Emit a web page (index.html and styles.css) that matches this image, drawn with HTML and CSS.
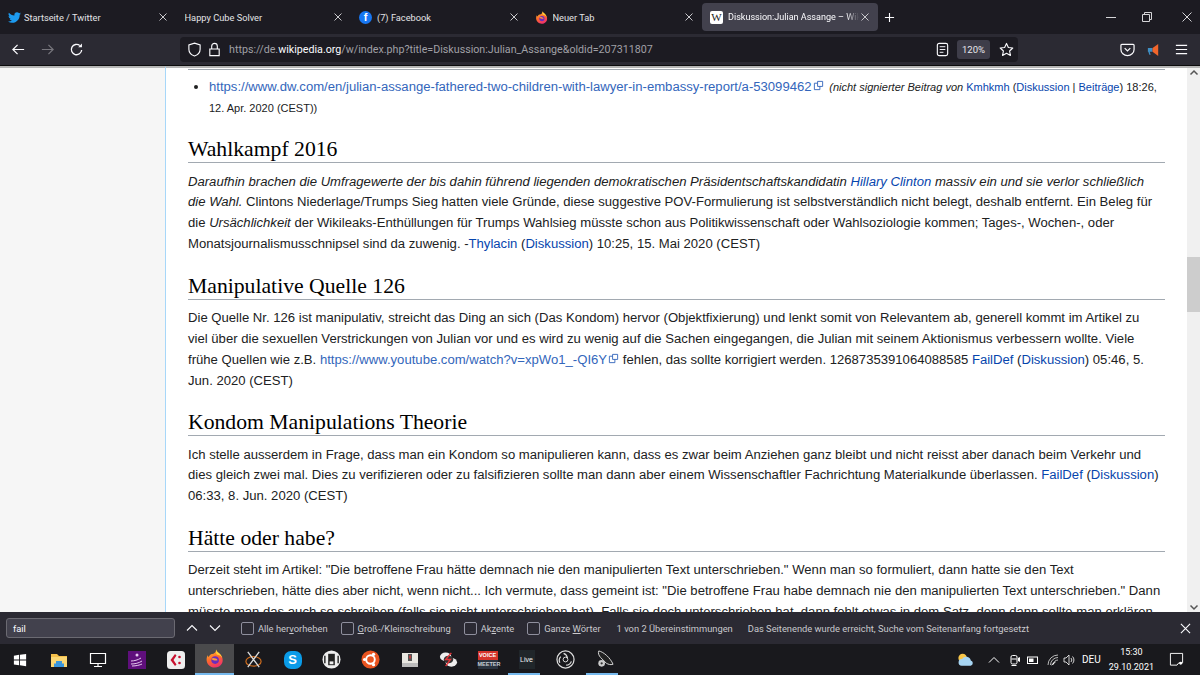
FILE: index.html
```html
<!DOCTYPE html>
<html lang="de">
<head>
<meta charset="utf-8">
<title>Diskussion:Julian Assange</title>
<link rel="stylesheet" href="styles.css">
</head>
<body>
<svg class="defs" width="0" height="0" aria-hidden="true">
  <defs>
    <linearGradient id="ffg" x1="0.2" y1="0" x2="0.6" y2="1"><stop offset="0" stop-color="#ffc42e"/><stop offset="0.5" stop-color="#ff6a2b"/><stop offset="1" stop-color="#ee2f6f"/></linearGradient>
    <symbol id="ff" viewBox="0 0 24 24">
      <path d="M14 .5c.4 2.800 3.500 4 5.500 6.500 2.800 3.200 3.700 7.300 2.200 10.800-1.800 3.900-5.500 5.700-9.500 5.700-5.500 0-10.200-4.400-10.200-10 0-2.100.6-4 1.500-5.500.2 1 .6 1.700 1.300 2.300.5-2 1.800-3.300 3.700-4 1.400.2 2.700-.3 3.500-1.200C13.700 3.800 14.300 2.200 14 .5z" fill="url(#ffg)"/>
      <path d="M14 .5c.4 2.800 3.500 4 5.500 6.500 1.200 1.400 2 3 2.400 4.600-2-3-4.500-4-7-4.500-1.200-1.700-1.400-4.600-.9-6.600z" fill="#ffd23a"/>
      <circle cx="12.800" cy="14" r="4.800" fill="#6a2dbd"/>
      <path d="M8 12.500c1.500-1.600 3.500-1.600 5-.5 1.300 0 2.500.7 2.800 2.200-2.400.6-5.300.3-7.800-1.700z" fill="#ff9a3a"/>
    </symbol>
    <symbol id="x" viewBox="0 0 10 10"><path d="M1.500 1.500l7 7M8.500 1.500l-7 7" fill="none" stroke="currentColor" stroke-width="1"/></symbol>
  </defs>
</svg>
<div class="window">
  <header class="tabstrip">
    <div class="tab">
      <svg class="fav fav-first" viewBox="0 0 24 24"><path fill="#1d9bf0" d="M23.953 4.570a10 10 0 01-2.825.775 4.958 4.958 0 002.163-2.723c-.951.555-2.005.959-3.127 1.184a4.920 4.920 0 00-8.384 4.482C7.690 8.095 4.067 6.130 1.640 3.162a4.822 4.822 0 00-.666 2.475c0 1.710.870 3.213 2.188 4.096a4.904 4.904 0 01-2.228-.616v.060a4.923 4.923 0 003.946 4.827 4.996 4.996 0 01-2.212.085 4.936 4.936 0 004.604 3.417 9.867 9.867 0 01-6.102 2.105c-.390 0-.779-.023-1.170-.067a13.995 13.995 0 007.557 2.209c9.053 0 13.998-7.496 13.998-13.985 0-.210 0-.420-.015-.630A9.935 9.935 0 0024 4.590z"/></svg>
      <span class="tab-title">Startseite / Twitter</span>
      <svg class="tab-x"><use href="#x"/></svg>
    </div>
    <div class="tab tab-nofav">
      <span class="tab-title">Happy Cube Solver</span>
      <svg class="tab-x"><use href="#x"/></svg>
    </div>
    <div class="tab">
      <span class="fav fav-fb">f</span>
      <span class="tab-title">(7) Facebook</span>
      <svg class="tab-x"><use href="#x"/></svg>
    </div>
    <div class="tab">
      <svg class="fav"><use href="#ff"/></svg>
      <span class="tab-title">Neuer Tab</span>
      <svg class="tab-x"><use href="#x"/></svg>
    </div>
    <div class="tab tab-active">
      <span class="fav fav-w">W</span>
      <span class="tab-title tab-fade">Diskussion:Julian Assange – Wikipedia</span>
      <svg class="tab-x tab-x-active"><use href="#x"/></svg>
    </div>
    <svg class="newtab" viewBox="0 0 12 12"><path d="M6 1v10M1 6h10" stroke="#fbfbfe" stroke-width="1.200"/></svg>
    <div class="winctl">
      <svg viewBox="0 0 10 10"><path d="M0 5.500h10" stroke="#d5d5d8" stroke-width="1"/></svg>
      <svg viewBox="0 0 10 10"><path d="M.5 2.500h7v7h-7zM2.500 2.500v-2h7v7h-2" fill="none" stroke="#d5d5d8"/></svg>
      <svg class="win-close" viewBox="0 0 10 10"><path d="M.5.500l9 9M9.500.500l-9 9" stroke="#d5d5d8"/></svg>
    </div>
  </header>

  <nav class="toolbar">
    <svg class="tb-ic" viewBox="0 0 16 16"><path d="M14 8H2.500M7 3L2 8l5 5" fill="none" stroke="#fbfbfe" stroke-width="1.300"/></svg>
    <svg class="tb-ic tb-fwd" viewBox="0 0 16 16"><path d="M2 8h11.500M9 3l5 5-5 5" fill="none" stroke="#77767d" stroke-width="1.300"/></svg>
    <svg class="tb-ic tb-reload" viewBox="0 0 16 16"><path d="M13.500 8.500A5.500 5.500 0 1 1 11.500 3.800" fill="none" stroke="#fbfbfe" stroke-width="1.400"/><path d="M13.800 1.500v4h-4z" fill="#fbfbfe"/></svg>
    <div class="urlbar">
      <svg class="url-ic" viewBox="0 0 16 16"><path d="M8 1.200l6 2v4.500c0 3.500-2.500 6-6 7.200-3.500-1.200-6-3.700-6-7.200V3.200z" fill="none" stroke="#fbfbfe" stroke-width="1.200"/></svg>
      <svg class="url-ic url-lock" viewBox="0 0 16 16"><path d="M3 7.500h10v7H3zM5 7.500V4.500a3 3 0 0 1 6 0v3" fill="none" stroke="#fbfbfe" stroke-width="1.200"/></svg>
      <span class="url-text">https://de.<b>wikipedia.org</b>/w/index.php?title=Diskussion:Julian_Assange&amp;oldid=207311807</span>
      <svg class="url-ic url-reader" viewBox="0 0 16 16"><rect x="2.500" y="1.500" width="11" height="13" rx="2" fill="none" stroke="#fbfbfe" stroke-width="1.200"/><path d="M5 5h6M5 8h6M5 11h4" stroke="#fbfbfe"/></svg>
      <span class="zoom-badge">120%</span>
      <svg class="url-ic url-star" viewBox="0 0 16 16"><path d="M8 1.500l2 4.300 4.700.6-3.400 3.200.9 4.700L8 12l-4.200 2.300.9-4.700L1.300 6.400 6 5.800z" fill="none" stroke="#fbfbfe" stroke-width="1.200" stroke-linejoin="round"/></svg>
    </div>
    <svg class="tb-ic tb-pocket" viewBox="0 0 16 16"><path d="M2 2.500h12a1 1 0 0 1 1 1V8a7 6.500 0 0 1-14 0V3.500a1 1 0 0 1 1-1z" fill="none" stroke="#fbfbfe" stroke-width="1.300"/><path d="M5 6.500l3 3 3-3" fill="none" stroke="#fbfbfe" stroke-width="1.300"/></svg>
    <svg class="tb-ic tb-ext" viewBox="0 0 16 16"><path d="M2 6.500h5v4H4l1 3H3.500l-1-3H2z" fill="#3f8fc4"/><path d="M7 6.500l6-4.500v13l-6-4.500z" fill="#f2652b"/></svg>
    <svg class="tb-ic tb-menu" viewBox="0 0 16 16"><path d="M2 3.500h12M2 8h12M2 12.500h12" stroke="#fbfbfe" stroke-width="1.300"/></svg>
  </nav>

  <div class="page">
    <aside class="side"></aside>
    <main class="main">
      <div class="toprule"></div>
      <ul class="list">
        <li><a class="ext" href="#">https://www.dw.com/en/julian-assange-fathered-two-children-with-lawyer-in-embassy-report/a-53099462</a><svg class="exticon" viewBox="0 0 12 12"><path d="M1.500 3.500h6v7h-6z" fill="none" stroke="#36b"/><path d="M5 1.500h5.500v5.500H5z" fill="#fff" stroke="#36b"/></svg> <small class="sig"><i>(nicht signierter Beitrag von</i> <a href="#">Kmhkmh</a> (<a href="#">Diskussion</a> | <a href="#">Beiträge</a>) 18:26,<br>12. Apr. 2020 (CEST))</small></li>
      </ul>
      <h2>Wahlkampf 2016</h2>
      <p><i>Daraufhin brachen die Umfragewerte der bis dahin führend liegenden demokratischen Präsidentschaftskandidatin <a href="#">Hillary Clinton</a> massiv ein und sie verlor schließlich<br>die Wahl.</i> Clintons Niederlage/Trumps Sieg hatten viele Gründe, diese suggestive POV-Formulierung ist selbstverständlich nicht belegt, deshalb entfernt. Ein Beleg für<br>die <i>Ursächlichkeit</i> der Wikileaks-Enthüllungen für Trumps Wahlsieg müsste schon aus Politikwissenschaft oder Wahlsoziologie kommen; Tages-, Wochen-, oder<br>Monatsjournalismusschnipsel sind da zuwenig. -<a href="#">Thylacin</a> (<a href="#">Diskussion</a>) 10:25, 15. Mai 2020 (CEST)</p>
      <h2>Manipulative Quelle 126</h2>
      <p>Die Quelle Nr. 126 ist manipulativ, streicht das Ding an sich (Das Kondom) hervor (Objektfixierung) und lenkt somit von Relevantem ab, generell kommt im Artikel zu<br>viel über die sexuellen Verstrickungen von Julian vor und es wird zu wenig auf die Sachen eingegangen, die Julian mit seinem Aktionismus verbessern wollte. Viele<br>frühe Quellen wie z.B. <a class="ext" href="#">https://www.youtube.com/watch?v=xpWo1_-QI6Y</a><svg class="exticon" viewBox="0 0 12 12"><path d="M1.500 3.500h6v7h-6z" fill="none" stroke="#36b"/><path d="M5 1.500h5.500v5.500H5z" fill="#fff" stroke="#36b"/></svg> fehlen, das sollte korrigiert werden. 1268735391064088585 <a href="#">FailDef</a> (<a href="#">Diskussion</a>) 05:46, 5.<br>Jun. 2020 (CEST)</p>
      <h2>Kondom Manipulations Theorie</h2>
      <p>Ich stelle ausserdem in Frage, dass man ein Kondom so manipulieren kann, dass es zwar beim Anziehen ganz bleibt und nicht reisst aber danach beim Verkehr und<br>dies gleich zwei mal. Dies zu verifizieren oder zu falsifizieren sollte man dann aber einem Wissenschaftler Fachrichtung Materialkunde überlassen. <a href="#">FailDef</a> (<a href="#">Diskussion</a>)<br>06:33, 8. Jun. 2020 (CEST)</p>
      <h2>Hätte oder habe?</h2>
      <p>Derzeit steht im Artikel: "Die betroffene Frau hätte demnach nie den manipulierten Text unterschrieben." Wenn man so formuliert, dann hatte sie den Text<br>unterschrieben, hätte dies aber nicht, wenn nicht... Ich vermute, dass gemeint ist: "Die betroffene Frau habe demnach nie den manipulierten Text unterschrieben." Dann<br>müsste man das auch so schreiben (falls sie nicht unterschrieben hat). Falls sie doch unterschrieben hat, dann fehlt etwas in dem Satz, denn dann sollte man erklären</p>
    </main>
    <div class="scrollbar">
      <svg class="sb-arrow" viewBox="0 0 10 10"><path d="M1.500 6.500L5 3l3.500 3.500" fill="none" stroke="#555" stroke-width="1.500"/></svg>
      <div class="sb-thumb"></div>
      <svg class="sb-arrow" viewBox="0 0 10 10"><path d="M1.500 3.500L5 7l3.500-3.500" fill="none" stroke="#555" stroke-width="1.500"/></svg>
    </div>
  </div>

  <div class="findbar">
    <div class="find-input">fail</div>
    <svg class="find-arrow" viewBox="0 0 12 12"><path d="M1 8.500L6 3.500l5 5" fill="none" stroke="#fbfbfe" stroke-width="1.100"/></svg>
    <svg class="find-arrow" viewBox="0 0 12 12"><path d="M1 3.500l5 5 5-5" fill="none" stroke="#fbfbfe" stroke-width="1.100"/></svg>
    <label class="chk chk-1"><span class="box"></span><span>Alle her<u>v</u>orheben</span></label>
    <label class="chk"><span class="box"></span><span><u>G</u>roß-/Kleinschreibung</span></label>
    <label class="chk"><span class="box"></span><span>Ak<u>z</u>ente</span></label>
    <label class="chk"><span class="box"></span><span>Ganze <u>W</u>örter</span></label>
    <span class="find-status">1 von 2 Übereinstimmungen</span>
    <span class="find-status find-msg">Das Seitenende wurde erreicht, Suche vom Seitenanfang fortgesetzt</span>
    <svg class="find-close" viewBox="0 0 12 12"><path d="M1 1l10 10M11 1L1 11" stroke="#fbfbfe" stroke-width="1.200"/></svg>
  </div>

  <footer class="taskbar">
    <div class="cell"><svg class="ti ti-win" viewBox="0 0 16 16"><path fill="#fff" d="M1 3l6-.9v5.400H1zM8 2l7-1v6.500H8zM1 8.500h6v5.400l-6-.9zM8 8.500h7V15l-7-1z"/></svg></div>
    <div class="cell"><svg class="ti" viewBox="0 0 18 18"><path d="M1 3h6l2 2h8v11H1z" fill="#f5c04a"/><path d="M1 6h16v10H1z" fill="#fbd774"/><path d="M6 10h6v2.500h2V16H4v-3.500h2z" fill="#3a96dd"/></svg></div>
    <div class="cell"><svg class="ti" viewBox="0 0 18 18"><path d="M1.500 2.500h15v10h-15zM9 12.500v3M5 15.500h8" fill="none" stroke="#fff" stroke-width="1.200"/></svg></div>
    <div class="cell"><svg class="ti" viewBox="0 0 18 18"><rect width="18" height="18" fill="#5f0f7c"/><path d="M3 13c4 0 8-1 11-3M3 10c3 0 7-1 10-3M4 15c4 0 8-1 10-2" fill="none" stroke="#e6c8ef" stroke-width="1"/><circle cx="9" cy="4" r="1.500" fill="#e6c8ef"/></svg></div>
    <div class="cell"><svg class="ti" viewBox="0 0 18 18"><rect width="18" height="18" rx="3.500" fill="#eee"/><path d="M8 3L3.500 9 8 15l1.500-1.500L6.500 9l3-4.500z" fill="#c8102e"/><circle cx="12.500" cy="6" r="1.300" fill="#c8102e"/><circle cx="12.500" cy="12" r="1.300" fill="#c8102e"/></svg></div>
    <div class="cell cell-active"><svg class="ti ti-lg"><use href="#ff"/></svg></div>
    <div class="cell"><svg class="ti ti-lg" viewBox="0 0 20 20"><ellipse cx="10" cy="12" rx="8" ry="5" fill="none" stroke="#c96a1e" stroke-width="1.300"/><path d="M4 2l12 16M16 2L4 18" stroke="#ddd" stroke-width="1.400"/></svg></div>
    <div class="cell"><span class="ti skype">S</span></div>
    <div class="cell"><svg class="ti ti-lg" viewBox="0 0 20 20"><circle cx="10" cy="10" r="9.500" fill="#eee"/><path d="M6.500 4h7v12h-7z" fill="#222"/><path d="M3 6v8M17 6v8M9 6v3h2V6" stroke="#222" fill="none" stroke-width="1.500"/><path d="M8 12h4v3H8z" fill="#eee"/></svg></div>
    <div class="cell"><svg class="ti ti-lg" viewBox="0 0 20 20"><circle cx="10" cy="10" r="9.500" fill="#e95420"/><circle cx="10" cy="10" r="4.500" fill="none" stroke="#fff" stroke-width="2"/><circle cx="3.800" cy="10" r="1.700" fill="#fff"/><circle cx="13.200" cy="4.600" r="1.700" fill="#fff"/><circle cx="13.200" cy="15.400" r="1.700" fill="#fff"/></svg></div>
    <div class="cell"><svg class="ti" viewBox="0 0 18 18"><rect x="1" y="2" width="16" height="14" fill="#e8e6e0"/><path d="M7 3h4v7H7z" fill="#555"/><path d="M9 4.500v3" stroke="#e33" stroke-width="1.300"/><path d="M1 12h16v4H1z" fill="#bbb"/></svg></div>
    <div class="cell"><svg class="ti ti-lg" viewBox="0 0 20 20"><ellipse cx="7" cy="7" rx="6" ry="4.500" fill="#eee"/><ellipse cx="13" cy="13" rx="6" ry="4.500" fill="#eee"/><ellipse cx="10" cy="10" rx="5" ry="4" fill="#333"/><path d="M13 3L7 10h5l-5 7" fill="none" stroke="#e2353b" stroke-width="1.500"/></svg></div>
    <div class="cell"><div class="vm"><span class="vm-a">VOICE</span><span class="vm-b">MEETER</span></div></div>
    <div class="cell cell-run"><span class="live">Live</span></div>
    <div class="cell"><svg class="ti ti-lg" viewBox="0 0 20 20"><circle cx="10" cy="10" r="9" fill="none" stroke="#ddd" stroke-width="1.300"/><circle cx="10" cy="10" r="2.500" fill="none" stroke="#ddd"/><path d="M8 3.500a6 6 0 0 1 4 5M16.200 12a6 6 0 0 1-5.500 4M4 13.500a6 6 0 0 1 1-6.500" fill="none" stroke="#ddd" stroke-width="1.300"/></svg></div>
    <div class="cell cell-run"><svg class="ti ti-lg" viewBox="0 0 20 20"><path d="M4 1c5 1 12 7 15 14-3 1-5 0-7-1L6 8C4 6 3 3 4 1z" fill="#222" stroke="#ddd"/><circle cx="7" cy="14" r="3.500" fill="#ccc"/><circle cx="7" cy="14" r="1.200" fill="#333"/></svg></div>
    <div class="tray">
      <svg class="tr-weather" viewBox="0 0 20 14"><circle cx="7" cy="5" r="4.500" fill="#f7c548"/><path d="M6 13a3.500 3.500 0 0 1 .4-7 5 5 0 0 1 9.200 1.400A2.900 2.900 0 0 1 15.500 13z" fill="#a6d4f2"/></svg>
      <svg class="tr-ic tr-chev" viewBox="0 0 12 12"><path d="M1 8.500l5-5 5 5" fill="none" stroke="#fff"/></svg>
      <svg class="tr-ic tr-meet" viewBox="0 0 12 12"><rect x="2" y="1.500" width="6" height="8.500" rx="1.500" fill="none" stroke="#fff"/><path d="M2.500 5h5M2.500 11.500h5" stroke="#fff"/><path d="M9 4l2-1v5L9 7z" fill="#fff"/></svg>
      <svg class="tr-ic tr-batt" viewBox="0 0 12 12"><rect x=".5" y="3" width="10" height="6.500" fill="none" stroke="#fff"/><rect x="2" y="4.500" width="4.500" height="3.500" fill="#fff"/></svg>
      <svg class="tr-ic tr-wifi" viewBox="0 0 12 12"><path d="M1 11a10 10 0 0 1 10-10M3.500 11A7.500 7.500 0 0 1 11 3.500M6 11a5 5 0 0 1 5-5" fill="none" stroke="#bbb"/><path d="M8.500 8l-4 3" stroke="#fff"/></svg>
      <svg class="tr-ic" viewBox="0 0 12 12"><path d="M1 4h2l3-3v10L3 8H1zM8 4a3 3 0 0 1 0 4M9.500 2.500a5 5 0 0 1 0 7" fill="none" stroke="#fff" stroke-width=".8"/></svg>
      <span class="tr-lang">DEU</span>
      <div class="tr-clock"><span>15:30</span><span>29.10.2021</span></div>
      <svg class="tr-note" viewBox="0 0 16 16"><path d="M1.500 1.500h13v10h-4l-2 2.500H1.500z" fill="none" stroke="#fff"/><circle cx="12.500" cy="12" r="1.500" fill="#fff"/></svg>
    </div>
  </footer>
</div>
</body>
</html>
```

FILE: styles.css
```css
* { box-sizing: border-box; }
html, body { margin: 0; padding: 0; }
body { width: 1200px; height: 675px; overflow: hidden; background: #1c1b22; font-family: Roboto, "Open Sans", sans-serif; }
.defs { position: absolute; }
svg { display: block; flex: none; }
.window { display: flex; flex-direction: column; width: 1200px; height: 675px; }

/* tabs */
.tabstrip { display: flex; align-items: center; height: 34px; flex: none; background: #1c1b22; color: #fbfbfe; }
.tab { display: flex; align-items: center; width: 175.500px; height: 28px; padding: 0 8px; font-size: 9.250px; color: #e3e3e6; }
.tab-nofav { padding-left: 9px; }
.fav { width: 13px; height: 13px; margin-right: 5px; }
.fav-first { margin-right: 3px; }
.fav-fb { display: flex; align-items: center; justify-content: center; border-radius: 50%; background: #1877f2; color: #fff; font: bold 11px "Liberation Sans", sans-serif; }
.fav-w { display: flex; align-items: center; justify-content: center; background: #fff; color: #222; border-radius: 2px; font: 11px "Liberation Serif", serif; }
.tab-title { flex: 1; min-width: 0; white-space: nowrap; overflow: hidden; }
.tab-x { width: 10px; height: 10px; margin-left: 4px; color: #c8c8cc; }
.tab-x-active { margin-left: 1px; }
.tab-active { background: #42414d; border-radius: 4px; color: #fbfbfe; font-size: 9.050px; }
.tab-fade { -webkit-mask-image: linear-gradient(to right, #000 90%, transparent); mask-image: linear-gradient(to right, #000 90%, transparent); }
.newtab { width: 11px; height: 11px; margin-left: 6px; }
.winctl { display: flex; align-items: center; gap: 26px; margin-left: auto; padding-right: 8px; }
.winctl svg { width: 10px; height: 10px; }
.winctl .win-close { margin-left: 4px; }

/* toolbar */
.toolbar { display: flex; align-items: center; height: 32px; flex: none; background: #2b2a33; padding-left: 11px; border-bottom: 1px solid #0c0c0d; }
.tb-ic { width: 15px; height: 15px; }
.tb-fwd { margin-left: 14px; }
.tb-reload { margin-left: 14px; }
.urlbar { display: flex; align-items: center; width: 838px; height: 25px; margin-left: 96px; background: #1c1b22; border-radius: 4px; padding-left: 7px; color: #fbfbfe; }
.url-ic { width: 15px; height: 15px; }
.url-lock { margin-left: 5px; }
.url-text { margin-left: 7px; font-size: 10.700px; color: #a0a0a6; white-space: nowrap; }
.url-text b { font-weight: 400; color: #fbfbfe; }
.url-reader { margin-left: auto; }
.zoom-badge { display: flex; align-items: center; justify-content: center; width: 33px; height: 19px; margin-left: 7px; border-radius: 3px; background: #3e3d49; font-size: 9.500px; color: #e8e8ec; }
.url-star { margin-left: 9px; margin-right: 4px; }
.tb-pocket { margin-left: 102px; }
.tb-ext { margin-left: 11px; }
.tb-menu { margin-left: 13px; }

/* page */
.page { display: flex; flex: 1; min-height: 0; background: #fff; }
.side { width: 166px; flex: none; background: #f6f6f6; border-right: 1px solid #a7d7f9; border-top: 2px solid #b5b5b5; }
.main { flex: 1; min-width: 0; overflow: hidden; padding: 0 22px; border-top: 2px solid #b5b5b5; font-family: "Liberation Sans", Arial, sans-serif; font-size: 13.120px; line-height: 20.800px; color: #202122; white-space: nowrap; }
.toprule { height: 1px; margin-top: 1px; margin-bottom: 6.800px; background: #a2a9b1; }
.list { margin: 0; padding: 0 0 0 21px; list-style: disc; }
h2 { height: 26px; margin: 19px 0 8.300px; font-family: "Liberation Serif", Georgia, serif; font-size: 21.700px; line-height: 25px; font-weight: 400; color: #000; border-bottom: 1px solid #a2a9b1; }
p { margin: 0; }
a { color: #0645ad; text-decoration: none; }
a.ext { color: #36b; }
.exticon { display: inline-block; width: 11px; height: 11px; margin-left: 1px; vertical-align: 0; }
.sig { font-size: 11px; margin-left: 2px; }
.scrollbar { display: flex; flex-direction: column; align-items: center; width: 13px; flex: none; background: #f0f0f0; border-top: 2px solid #b5b5b5; }
.sb-arrow { width: 10px; height: 10px; flex: none; }
.sb-thumb { width: 13px; height: 55px; margin: 179px 0 auto; background: #cdcdcd; }

/* find */
.findbar { display: flex; align-items: center; height: 32px; flex: none; padding: 0 9px 0 6px; background: #2b2a33; color: #fbfbfe; font-size: 9.330px; }
.find-input { width: 169px; height: 20px; padding: 0 6px; display: flex; align-items: center; background: #42414d; border: 1px solid #6b6a72; border-radius: 3px; }
.find-arrow { width: 12px; height: 12px; margin-left: 11px; }
.chk { display: flex; align-items: center; margin-left: 13px; color: #c9c9cd; white-space: nowrap; }
.chk-1 { margin-left: 20px; }
.box { width: 13px; height: 13px; margin-right: 4px; border: 1px solid #8f8f9d; border-radius: 2px; background: #2b2a33; }
.find-status { margin-left: 16px; color: #c9c9cd; white-space: nowrap; }
.find-msg { margin-left: 15px; }
.find-close { width: 11px; height: 11px; margin-left: auto; }

/* taskbar */
.taskbar { display: flex; align-items: stretch; height: 31px; flex: none; background: #19191d; color: #fff; }
.cell { display: flex; align-items: center; justify-content: center; width: 39px; flex: none; position: relative; }
.cell-active { background: #4a4a4c; border-bottom: 2px solid #76b9ed; }
.cell-run::after { content: ""; position: absolute; left: 1px; bottom: 0; width: 32px; height: 2px; background: #76b9ed; }
.ti { width: 18px; height: 18px; }
.ti-win { width: 14px; height: 14px; }
.ti-lg { width: 19px; height: 19px; }
.skype { display: flex; align-items: center; justify-content: center; background: #0a9be8; border-radius: 7px; font: bold 13px "Liberation Sans", sans-serif; color: #fff; }
.vm { display: flex; flex-direction: column; width: 20px; font: bold 5.500px/9px "Liberation Sans", sans-serif; text-align: center; }
.vm-a { background: #d6352b; color: #fff; }
.vm-b { background: #2a3440; color: #c5ccd4; }
.live { display: flex; align-items: center; justify-content: center; width: 16px; height: 19px; background: #20262a; font: 7px "Liberation Sans", sans-serif; color: #f2f2f2; }
.tray { display: flex; align-items: center; margin-left: auto; padding-right: 16px; }
.tr-weather { width: 19px; height: 14px; margin-right: 13px; }
.tr-ic { width: 12px; height: 12px; }
.tr-chev { margin-right: 9px; }
.tr-meet { margin-right: 6px; }
.tr-batt { margin-right: 8px; }
.tr-wifi { margin-right: 4px; }
.tr-lang { font-size: 10px; margin: 0 8px 0 7px; }
.tr-clock { display: flex; flex-direction: column; align-items: center; font-size: 9px; line-height: 15px; margin-right: 15px; }
.tr-note { width: 15px; height: 15px; }
```
